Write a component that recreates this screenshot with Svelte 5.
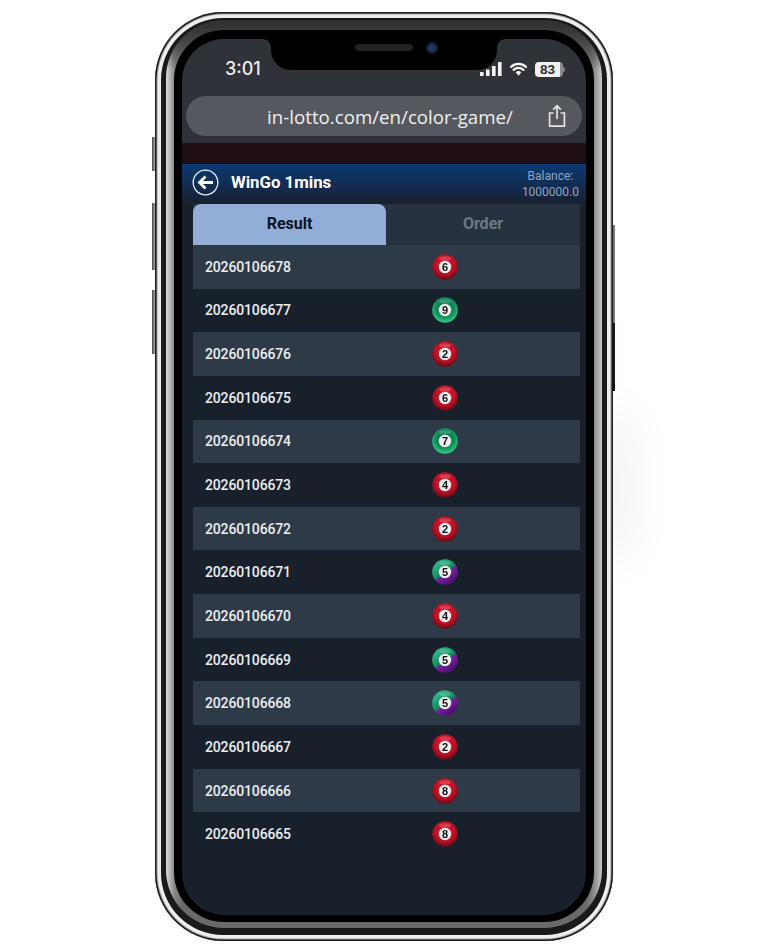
<script>
  const rows = [
    { id: '20260106678', n: 6, c: 'red' },
    { id: '20260106677', n: 9, c: 'green' },
    { id: '20260106676', n: 2, c: 'red' },
    { id: '20260106675', n: 6, c: 'red' },
    { id: '20260106674', n: 7, c: 'green' },
    { id: '20260106673', n: 4, c: 'red' },
    { id: '20260106672', n: 2, c: 'red' },
    { id: '20260106671', n: 5, c: 'mix' },
    { id: '20260106670', n: 4, c: 'red' },
    { id: '20260106669', n: 5, c: 'mix' },
    { id: '20260106668', n: 5, c: 'mix' },
    { id: '20260106667', n: 2, c: 'red' },
    { id: '20260106666', n: 8, c: 'red' },
    { id: '20260106665', n: 8, c: 'red' }
  ];
</script>

<main>
  <div class="phone">
    <span class="btn mute"></span>
    <span class="btn volup"></span>
    <span class="btn voldown"></span>
    <span class="btn power"></span>
    <span class="btn power2"></span>

    <div class="screen">
      <div class="top">
        <div class="status">
          <span class="time">3:01</span>
          <div class="status-icons">
            <svg width="22" height="14" viewBox="0 0 22 14">
              <rect x="0" y="10" width="3.6" height="4" rx="0.6" fill="#f4f4f4" />
              <rect x="6" y="7.5" width="3.6" height="6.5" rx="0.6" fill="#f4f4f4" />
              <rect x="12" y="4" width="3.6" height="10" rx="0.6" fill="#f4f4f4" />
              <rect x="18" y="0" width="3.6" height="14" rx="0.6" fill="#f4f4f4" />
            </svg>
            <svg width="17" height="14" viewBox="0 0 17 14">
              <path d="M1 4.9a11 11 0 0 1 15 0M3.6 7.8a7.2 7.2 0 0 1 9.8 0" fill="none" stroke="#f4f4f4" stroke-width="2.3" stroke-linecap="round" />
              <path d="M5.7 10.3a3.9 3.9 0 0 1 5.6 0L8.5 13.8z" fill="#f4f4f4" />
            </svg>
            <span class="battery"><b>83</b></span>
          </div>
        </div>
        <div class="urlbar">
          <span class="url">in-lotto.com/en/color-game/</span>
          <svg class="share" width="20" height="24" viewBox="0 0 20 24">
            <path d="M6.5 9H2.6v13.2h14.8V9h-3.9M10 15V2M6.2 5.6 10 1.8l3.8 3.8" fill="none" stroke="#e4e4e4" stroke-width="1.7" />
          </svg>
        </div>
      </div>

      <div class="strip"></div>

      <div class="app">
        <header>
          <svg class="back" width="27" height="27" viewBox="0 0 27 27">
            <circle cx="13.5" cy="13.5" r="12.3" fill="none" stroke="#e8eef6" stroke-width="1.3" />
            <path d="M21 13.5H8M13.5 7.5l-6 6 6 6" fill="none" stroke="#fff" stroke-width="2.8" />
          </svg>
          <h1>WinGo 1mins</h1>
          <div class="balance">Balance:<br />1000000.0</div>
        </header>

        <div class="tabs">
          <div class="tab active">Result</div>
          <div class="tab">Order</div>
        </div>

        <div class="list">
          {#each rows as r, i}
            <div class="row" class:alt={i % 2 == 0}>
              <span class="num">{r.id}</span>
              <svg class="ball" width="26" height="26" viewBox="0 0 26 26">
                <defs>
                  <radialGradient id="b-red" cx="50%" cy="38%" r="62%">
                    <stop offset="0" stop-color="#e01a30" />
                    <stop offset="0.65" stop-color="#bb1024" />
                    <stop offset="1" stop-color="#660b16" />
                  </radialGradient>
                  <radialGradient id="b-green" cx="50%" cy="40%" r="62%">
                    <stop offset="0" stop-color="#0a6e48" />
                    <stop offset="0.6" stop-color="#0f8f5a" />
                    <stop offset="1" stop-color="#37d28c" />
                  </radialGradient>
                  <linearGradient id="b-mix" x1="0.2" y1="0.1" x2="0.8" y2="0.9">
                    <stop offset="0" stop-color="#2fb98a" />
                    <stop offset="0.52" stop-color="#0c8a58" />
                    <stop offset="0.56" stop-color="#7b1fa2" />
                    <stop offset="1" stop-color="#4d0f70" />
                  </linearGradient>
                </defs>
                <circle cx="13" cy="13" r="12.8" fill="url(#b-{r.c})" />
                <ellipse cx="13" cy="4.4" rx="6" ry="2.2" fill="#fff" opacity="0.18" />
                <circle cx="13" cy="13" r="6.2" fill="#efefef" />
                <text x="13" y="17" text-anchor="middle">{r.n}</text>
              </svg>
            </div>
          {/each}
        </div>
      </div>

      <div class="notch">
        <span class="speaker"></span>
        <span class="camera"></span>
      </div>
    </div>
  </div>
  <div class="glow"></div>
</main>

<style>
  :global(body) {
    background: #fff;
  }
  main {
    position: relative;
    height: 952px;
    padding: 12px 0 0 155px;
    box-sizing: border-box;
    overflow: hidden;
  }
  .phone {
    position: relative;
    z-index: 1;
    width: 458px;
    height: 929px;
    box-sizing: border-box;
    padding: 27px 27px 26px 27px;
    border-radius: 68px;
    background: #1a1a1a;
    box-shadow:
      inset 0 0 0 1.5px #1c1c1c,
      inset 0 0 0 2.5px #999,
      inset 0 0 0 6px #eeeeee;
  }
  /* steel band between the two dark rings */
  .phone::before {
    content: "";
    position: absolute;
    top: 8px;
    left: 11px;
    right: 11px;
    bottom: 13px;
    border-radius: 58px;
    background:
      linear-gradient(180deg, #2e2e2e 0, #3e3e3e 16px, rgba(70, 70, 70, 0) 50px),
      linear-gradient(90deg, #dcdcdc 0, #8a8a8a 8px, #6a6a6a 16px, #6a6a6a calc(100% - 16px), #8a8a8a calc(100% - 8px), #c8c8c8 100%);
  }
  .btn {
    position: absolute;
    width: 3px;
    background: linear-gradient(90deg, #444, #aaa);
  }
  .mute { left: -3px; top: 125px; height: 34px; }
  .volup { left: -3px; top: 191px; height: 67px; }
  .voldown { left: -3px; top: 278px; height: 64px; }
  .power { right: -2px; width: 2px; top: 213px; height: 98px; background: #777; }
  .power2 { right: -2px; width: 2px; top: 311px; height: 68px; background: #1c1015; }

  .screen {
    position: relative;
    height: 100%;
    border-radius: 42px;
    background: #18202c;
    box-shadow: 0 -1px 0 8px #000;
    display: flex;
    flex-direction: column;
    font-family: Roboto, "Liberation Sans", sans-serif;
  }
  .notch {
    position: absolute;
    top: 0;
    left: 89px;
    width: 226px;
    height: 31px;
    background: #000;
    border-radius: 0 0 20px 20px;
  }
  .notch::before,
  .notch::after {
    content: "";
    position: absolute;
    top: 0;
    width: 8px;
    height: 8px;
  }
  .notch::before {
    left: -8px;
    background: radial-gradient(circle at 0 100%, transparent 7.5px, #000 8px);
  }
  .notch::after {
    right: -8px;
    background: radial-gradient(circle at 100% 100%, transparent 7.5px, #000 8px);
  }
  .speaker {
    position: absolute;
    left: 84px;
    top: 5px;
    width: 58px;
    height: 7px;
    border-radius: 4px;
    background: #222;
  }
  .camera {
    position: absolute;
    left: 155px;
    top: 3px;
    width: 12px;
    height: 12px;
    border-radius: 50%;
    background: radial-gradient(circle, #20365c 30%, #0f1420 75%);
  }

  .top {
    height: 104px;
    box-sizing: border-box;
    background: #2f3238;
    padding: 0 4px;
    flex: none;
    border-radius: 42px 42px 0 0;
  }
  .status {
    height: 57px;
    display: flex;
    justify-content: space-between;
    align-items: flex-end;
    padding: 0 19px 16px 39px;
    box-sizing: border-box;
  }
  .time {
    font-family: Inter, sans-serif;
    font-weight: 500;
    font-size: 18px;
    line-height: 22px;
    color: #ececec;
  }
  .status-icons {
    display: flex;
    align-items: center;
    gap: 8px;
    height: 22px;
  }
  .battery {
    width: 28px;
    height: 15px;
    box-sizing: border-box;
    border-radius: 4px;
    background: linear-gradient(90deg, #f1f1f1 88%, #8d8d8d 88%);
    color: #2a2c31;
    font-family: "Liberation Sans", sans-serif;
    font-size: 13.5px;
    line-height: 15px;
    padding-right: 3px;
    text-align: center;
    position: relative;
  }
  .battery::after {
    content: "";
    position: absolute;
    right: -2px;
    top: 5px;
    width: 2px;
    height: 5px;
    border-radius: 0 2px 2px 0;
    background: #888;
  }
  .urlbar {
    position: relative;
    height: 40px;
    border-radius: 20px;
    background: #55585e;
    display: flex;
    align-items: center;
    justify-content: center;
  }
  .url {
    font-family: "Open Sans", sans-serif;
    font-size: 18.7px;
    color: #f0f0f0;
    margin-left: 12px;
    white-space: nowrap;
  }
  .share {
    position: absolute;
    right: 15px;
    top: 8px;
  }
  .strip {
    height: 21px;
    flex: none;
    background: #1f0d15;
  }

  .app {
    flex: 1;
    display: flex;
    flex-direction: column;
    border-radius: 0 0 42px 42px;
    overflow: hidden;
  }
  header {
    height: 40px;
    flex: none;
    display: flex;
    align-items: center;
    padding: 0 7px 4px 10px;
    box-sizing: border-box;
    background: linear-gradient(180deg, #0a3a72 0%, #14294a 65%, #18202c 100%);
  }
  h1 {
    margin: 0 0 0 12px;
    font-size: 16.8px;
    font-weight: 700;
    color: #fff;
    flex: 1;
  }
  .balance {
    font-size: 12px;
    line-height: 16px;
    color: #8fa6c6;
    text-align: center;
    margin: 3px 0 0 0;
  }
  .tabs {
    display: grid;
    grid-template-columns: 193px 194px;
    height: 41px;
    flex: none;
    margin: 0 6px 0 11px;
    background: #263240;
  }
  .tab {
    display: flex;
    align-items: center;
    justify-content: center;
    padding-bottom: 2px;
    box-sizing: border-box;
    font-size: 16px;
    font-weight: 700;
    color: #6f7883;
  }
  .tab.active {
    background: #92add6;
    color: #0c1420;
    border-radius: 8px 8px 0 0;
  }
  .list {
    margin: 0 6px 0 11px;
  }
  .row {
    height: 43.65px;
    display: grid;
    grid-template-columns: 227px 26px;
    align-items: center;
    padding-left: 12px;
    box-sizing: border-box;
  }
  .row.alt {
    background: #2f3a48;
  }
  .num {
    font-size: 14px;
    font-weight: 500;
    letter-spacing: -0.15px;
    color: #eceef1;
  }
  .ball {
    filter: blur(0.4px);
  }
  .ball text {
    font-family: "Liberation Sans", sans-serif;
    font-size: 11px;
    font-weight: 700;
    fill: #111;
  }
  .glow {
    position: absolute;
    left: 590px;
    top: 400px;
    width: 50px;
    height: 170px;
    border-radius: 50%;
    background: #000;
    opacity: 0.04;
    filter: blur(22px);
  }
</style>
